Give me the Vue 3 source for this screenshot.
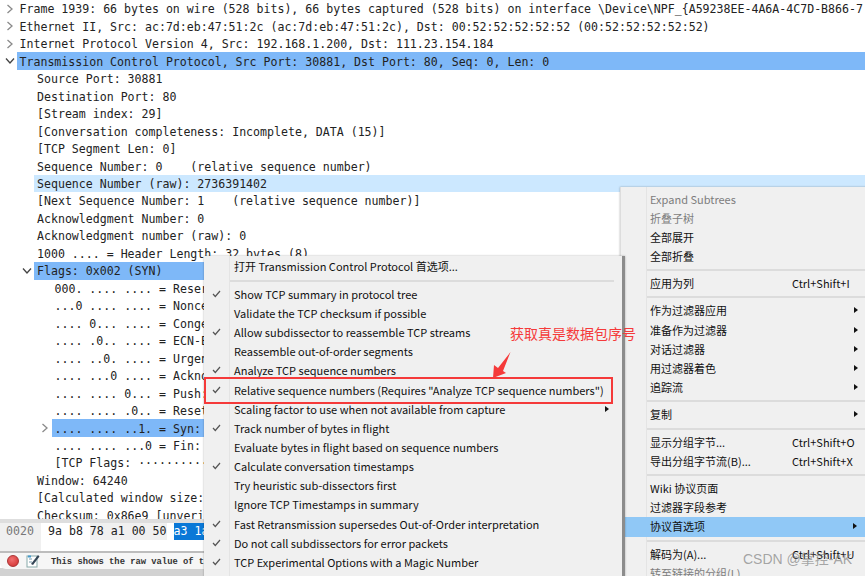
<script setup>
const tree = [
  { t: 'Frame 1939: 66 bytes on wire (528 bits), 66 bytes captured (528 bits) on interface \\Device\\NPF_{A59238EE-4A6A-4C7D-B866-7', d: 0, a: 'r' },
  { t: 'Ethernet II, Src: ac:7d:eb:47:51:2c (ac:7d:eb:47:51:2c), Dst: 00:52:52:52:52:52 (00:52:52:52:52:52)', d: 0, a: 'r' },
  { t: 'Internet Protocol Version 4, Src: 192.168.1.200, Dst: 111.23.154.184', d: 0, a: 'r' },
  { t: 'Transmission Control Protocol, Src Port: 30881, Dst Port: 80, Seq: 0, Len: 0', d: 0, a: 'd', s: 'sel' },
  { t: 'Source Port: 30881', d: 1 },
  { t: 'Destination Port: 80', d: 1 },
  { t: '[Stream index: 29]', d: 1 },
  { t: '[Conversation completeness: Incomplete, DATA (15)]', d: 1 },
  { t: '[TCP Segment Len: 0]', d: 1 },
  { t: 'Sequence Number: 0    (relative sequence number)', d: 1 },
  { t: 'Sequence Number (raw): 2736391402', d: 1, s: 'cur' },
  { t: '[Next Sequence Number: 1    (relative sequence number)]', d: 1 },
  { t: 'Acknowledgment Number: 0', d: 1 },
  { t: 'Acknowledgment number (raw): 0', d: 1 },
  { t: '1000 .... = Header Length: 32 bytes (8)', d: 1 },
  { t: 'Flags: 0x002 (SYN)', d: 1, a: 'd', s: 'sel' },
  { t: '000. .... .... = Reserved: Not set', d: 2 },
  { t: '...0 .... .... = Nonce: Not set', d: 2 },
  { t: '.... 0... .... = Congestion Window Reduced', d: 2 },
  { t: '.... .0.. .... = ECN-Echo: Not set', d: 2 },
  { t: '.... ..0. .... = Urgent: Not set', d: 2 },
  { t: '.... ...0 .... = Acknowledgment: Not set', d: 2 },
  { t: '.... .... 0... = Push: Not set', d: 2 },
  { t: '.... .... .0.. = Reset: Not set', d: 2 },
  { t: '.... .... ..1. = Syn: Set', d: 2, a: 'r', s: 'sel' },
  { t: '.... .... ...0 = Fin: Not set', d: 2 },
  { t: '[TCP Flags: ··········S·]', d: 2 },
  { t: 'Window: 64240', d: 1 },
  { t: '[Calculated window size: 64240]', d: 1 },
  { t: 'Checksum: 0x86e9 [unverified]', d: 1 }
]
const prefMenu = [
  { t: '打开 Transmission Control Protocol 首选项...' },
  { sep: true },
  { t: 'Show TCP summary in protocol tree', c: true },
  { t: 'Validate the TCP checksum if possible' },
  { t: 'Allow subdissector to reassemble TCP streams', c: true },
  { t: 'Reassemble out-of-order segments' },
  { t: 'Analyze TCP sequence numbers', c: true },
  { t: 'Relative sequence numbers (Requires "Analyze TCP sequence numbers")', c: true },
  { t: 'Scaling factor to use when not available from capture', m: true },
  { t: 'Track number of bytes in flight', c: true },
  { t: 'Evaluate bytes in flight based on sequence numbers' },
  { t: 'Calculate conversation timestamps', c: true },
  { t: 'Try heuristic sub-dissectors first' },
  { t: 'Ignore TCP Timestamps in summary' },
  { t: 'Fast Retransmission supersedes Out-of-Order interpretation', c: true },
  { t: 'Do not call subdissectors for error packets', c: true },
  { t: 'TCP Experimental Options with a Magic Number', c: true }
]
const ctxMenu = [
  { t: 'Expand Subtrees', dis: true },
  { t: '折叠子树', dis: true },
  { t: '全部展开' },
  { t: '全部折叠' },
  { sep: true },
  { t: '应用为列', k: 'Ctrl+Shift+I' },
  { sep: true },
  { t: '作为过滤器应用', m: true },
  { t: '准备作为过滤器', m: true },
  { t: '对话过滤器', m: true },
  { t: '用过滤器着色', m: true },
  { t: '追踪流', m: true },
  { sep: true },
  { t: '复制', m: true },
  { sep: true },
  { t: '显示分组字节...', k: 'Ctrl+Shift+O' },
  { t: '导出分组字节流(B)...', k: 'Ctrl+Shift+X' },
  { sep: true },
  { t: 'Wiki 协议页面' },
  { t: '过滤器字段参考' },
  { t: '协议首选项', m: true, hi: true },
  { sep: true },
  { t: '解码为(A)...', k: 'Ctrl+Shift+U' },
  { t: '转至链接的分组(L)', dis: true }
]
</script>

<template>
  <div class="app">
    <div class="tree">
      <div v-for="(r, i) in tree" :key="i" class="row" :class="'d' + r.d">
        <span class="arrow">
          <svg v-if="r.a === 'r'" width="8" height="10" viewBox="0 0 8 10"><path d="M1.5 1 L6 5 L1.5 9" fill="none" stroke="#8a8a8a" stroke-width="1.3"/></svg>
          <svg v-if="r.a === 'd'" width="10" height="8" viewBox="0 0 10 8"><path d="M1 1.5 L5 6 L9 1.5" fill="none" stroke="#444" stroke-width="1.3"/></svg>
        </span>
        <span class="label" :class="r.s">{{ r.t }}</span>
      </div>
    </div>
    <div class="hex">
      <span class="off">0020</span>
      <span class="bytes">9a b8 <i class="g">78 a1 00 50</i> <b>a3 1a</b></span>
    </div>
    <div class="status">
      <span class="dot"></span>
      <svg class="note" width="14" height="14" viewBox="0 0 14 14"><rect x="1" y="2" width="10" height="11" fill="#fff" stroke="#8aa"/><path d="M3 5h3M3 8h3" stroke="#79a" stroke-width="1"/><path d="M5 10 L12 1 L13.5 2.5 L7 11Z" fill="#345"/><path d="M2 1.5h3v2H2z" fill="#49c"/></svg>
      <span class="msg">This shows the raw value of the sequence number</span>
    </div>
    <div class="foot"></div>

    <div class="menu ctx">
      <template v-for="(m, i) in ctxMenu" :key="i">
        <div v-if="m.sep" class="sep"></div>
        <div v-else class="item" :class="{ dis: m.dis, hi: m.hi }">
          <span class="txt">{{ m.t }}</span>
          <span v-if="m.k" class="key">{{ m.k }}</span>
          <span v-if="m.m" class="more"></span>
        </div>
      </template>
    </div>

    <div class="menu pref">
      <template v-for="(m, i) in prefMenu" :key="i">
        <div v-if="m.sep" class="sep"></div>
        <div v-else class="item">
          <svg v-if="m.c" class="check" width="9" height="8" viewBox="0 0 9 8"><path d="M1 4 L3.3 6.5 L8 1" fill="none" stroke="#555" stroke-width="1.2"/></svg>
          <span class="txt">{{ m.t }}</span>
          <span v-if="m.m" class="more"></span>
        </div>
      </template>
    </div>

    <div class="redbox"></div>
    <div class="note-text">获取真是数据包序号</div>
    <svg class="red-arrow" width="26" height="30" viewBox="0 0 26 30"><path d="M5 28 L6 15 L10 18 L22.5 2 L15 21 L18 23 Z" fill="#f53a3a"/></svg>
    <div class="wm">CSDN @掌控-AK</div>
  </div>
</template>

<style scoped>
.app {
  position: relative;
  isolation: isolate;
  width: 865px;
  height: 576px;
  overflow: hidden;
  background: #fff;
  display: flex;
  flex-direction: column;
  font-family: "DejaVu Sans Mono", monospace;
  color: #222;
}
.tree {
  height: 519px;
  overflow: hidden;
  flex: none;
}
.row {
  height: 17.47px;
  line-height: 17.47px;
  display: flex;
  font-size: 11.58px;
  white-space: pre;
}
.row.d0 { padding-left: 3px; }
.row.d1 { padding-left: 20.5px; }
.row.d2 { padding-left: 38px; }
.arrow {
  width: 13.5px;
  flex: none;
  display: flex;
  align-items: center;
  justify-content: center;
}
.label {
  flex: 1;
  height: 100%;
  box-sizing: border-box;
  padding: 1.3px 0 0 3px;
}
.label.sel { background: #7eb8f8; }
.label.cur { background: #cce8ff; }
.hex {
  height: 32px;
  flex: none;
  border-top: 4px solid #dedede;
  box-sizing: border-box;
  font-size: 11.58px;
  line-height: 17px;
  display: flex;
  white-space: pre;
}
.off {
  width: 41px;
  box-sizing: border-box;
  padding-left: 6px;
  background: #f0f0f0;
  color: #777;
}
.bytes { padding-left: 7px; }
.bytes i { display: inline-block; font-style: normal; background: #f0f0f0; }
.bytes b { display: inline-block; font-weight: normal; background: #0a78d7; color: #fff; }
.status {
  height: 18px;
  flex: none;
  box-sizing: border-box;
  background: #f6f6f6;
  border-top: 2px solid #bdbdbd;
  border-bottom-left-radius: 6px;
  display: flex;
  align-items: center;
  padding-left: 7px;
  font-family: "Liberation Mono", monospace;
  font-size: 8.8px;
  font-weight: bold;
  color: #333;
}
.foot { flex: 1; background: #d2d2d2; margin-top: -1px; position: relative; z-index: -1; }
.dot {
  width: 12px;
  height: 12px;
  border-radius: 50%;
  background: radial-gradient(circle at 40% 35%, #f07070, #d02c2c);
  border: 1px solid #a33;
  margin-right: 7px;
  box-sizing: border-box;
  flex: none;
}
.note { margin-right: 11px; flex: none; }
.msg { white-space: pre; margin-top: 2px; }

.menu {
  position: absolute;
  background: #f0f0f0;
  box-sizing: border-box;
  font-family: "Noto Sans CJK SC", "Noto Sans", sans-serif;
  font-size: 11px;
  color: #111;
  box-shadow: 0 0 2px rgba(0, 0, 0, .3);
}
.ctx {
  left: 620px;
  top: 187px;
  width: 260px;
  height: 400px;
  padding-top: 2.5px;
  border-left: 1px solid #ddd;
}
.pref {
  left: 204px;
  top: 256px;
  width: 421px;
  height: 330px;
  padding-top: 1px;
  border-right: 3px solid #8c8c8c;
}
.ctx::before, .pref::before {
  content: "";
  position: absolute;
  left: 25px;
  top: 0;
  bottom: 0;
  width: 1px;
  background: #e4e4e4;
}
.item {
  position: relative;
  height: 19.15px;
  line-height: 19.15px;
  padding-left: 29px;
  white-space: pre;
}
.ctx .item { height: 19.2px; line-height: 19.2px; }
.pref .item { padding-left: 30px; }
.sep {
  height: 2px;
  background: #dcdcdc;
}
.ctx .sep { margin: 3px 0 3px 25px; }
.pref .sep { margin: 3.4px 0 3.4px 25px; width: 385px; }
.dis { color: #7d7d7d; }
.hi { background: #90c8f6; margin-left: -1px; padding-left: 30px; }
.key { position: absolute; left: 171px; top: 0; }
.more {
  position: absolute;
  left: 233px;
  top: 6px;
  border-left: 4px solid #111;
  border-top: 3.5px solid transparent;
  border-bottom: 3.5px solid transparent;
}
.pref .more { left: 401px; }
.check { position: absolute; left: 8px; top: 5px; }
.redbox {
  position: absolute;
  left: 204px;
  top: 377px;
  width: 409px;
  height: 27px;
  box-sizing: border-box;
  border: 2px solid #f53a3a;
}
.note-text {
  position: absolute;
  left: 510px;
  top: 324px;
  font-family: "Noto Sans CJK SC", sans-serif;
  font-size: 14px;
  line-height: 18px;
  color: #f53a3a;
}
.red-arrow { position: absolute; left: 488px; top: 350px; }
.wm {
  position: absolute;
  left: 743px;
  top: 548px;
  font-family: "Liberation Sans", "Noto Sans CJK SC", sans-serif;
  font-size: 14px;
  color: rgba(120, 120, 120, .65);
}
</style>
